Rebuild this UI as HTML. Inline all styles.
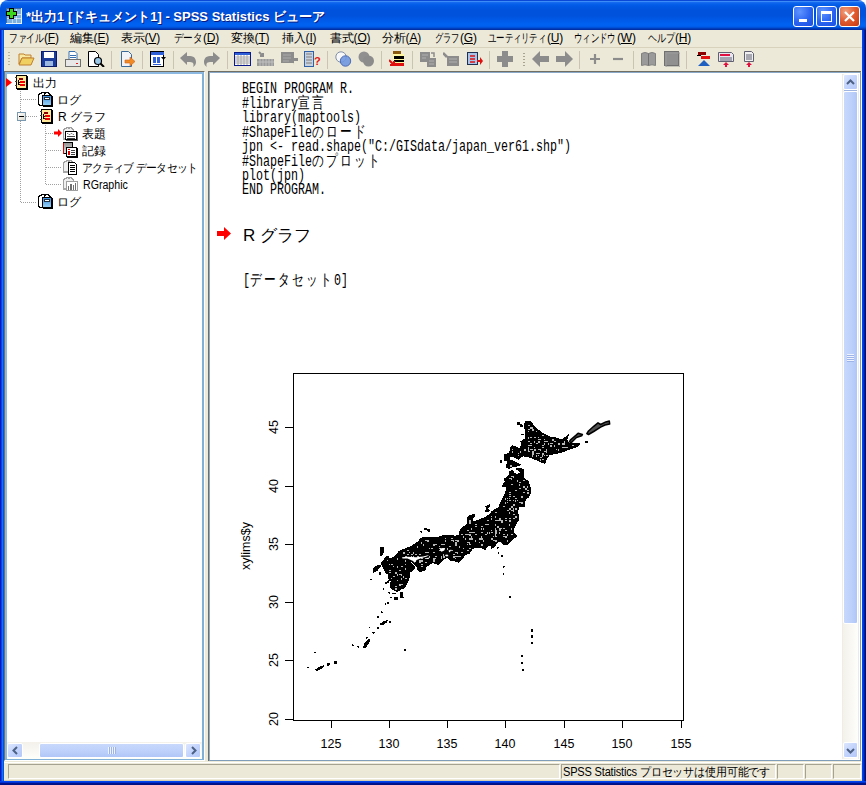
<!DOCTYPE html>
<html><head><meta charset="utf-8">
<style>
*{box-sizing:border-box}
html,body{margin:0;padding:0;width:866px;height:785px;overflow:hidden;background:#fff}
body{position:relative;font-family:"Liberation Sans",sans-serif;}
.a{position:absolute}
#title{left:0;top:0;width:866px;height:30px;border-radius:8px 8px 0 0;background:linear-gradient(#0a48d8 0px,#0a48d8 1px,#3c8cf8 1px,#3c8cf8 2px,#1a6cf0 2px,#0660ea 4px,#0058e4 6px,#0052dc 10px,#0052dc 16px,#005ceb 21px,#0062f2 25px,#005ae8 27px,#0046c8 28px,#0036b0 29px,#0028a0 30px)}
#frameL{left:0;top:30px;width:4px;height:755px;background:linear-gradient(90deg,#0014c8 0,#0014c8 1px,#0a44e0 1px,#0a44e0 2px,#1a6ef0 2px,#1a6ef0 3px,#0054e4 3px)}
#frameR{left:862px;top:30px;width:4px;height:755px;background:linear-gradient(90deg,#0044f0 0,#0044f0 1px,#0036d4 1px,#0036d4 2px,#001ea0 2px,#001ea0 3px,#001080 3px)}
#frameB{left:0;top:781px;width:866px;height:4px;background:linear-gradient(#0044f0 0,#0044f0 1px,#0030d0 1px,#0030d0 2px,#001490 2px,#001080 4px)}
#client{left:4px;top:30px;width:858px;height:751px;background:#ece9d8}
.ttl{left:26px;top:8px;color:#fff;font-weight:bold;font-size:13px;white-space:nowrap;text-shadow:1px 1px 0 #0a1a80}
.tb{top:6px;width:21px;height:21px;border:1px solid #fff;border-radius:3px;background:radial-gradient(circle at 30% 25%,#5f95ff,#2a63f0 55%,#1c4fe0)}
.tb.x{background:radial-gradient(circle at 30% 25%,#f0a080,#e05a30 50%,#c83810)}
.m{position:absolute;top:30px;font-size:12px;color:#000;white-space:nowrap;letter-spacing:-0.2px}
.k{display:inline-block;white-space:nowrap}.k span{display:inline-block;transform-origin:0 0}
.sep{position:absolute;top:51px;width:1px;height:18px;background:#c9c5b2}
.pane{background:#fff}
.code{position:absolute;left:242px;font-family:"Liberation Mono",monospace;font-size:16px;letter-spacing:0;white-space:pre;color:#000;line-height:14px;transform:scaleX(0.72917);transform-origin:0 0}
.code b{font-weight:normal;letter-spacing:3.2px;font-family:"Liberation Sans",sans-serif;font-size:16px}
.tree{position:absolute;font-size:12px;color:#000;white-space:nowrap}
.dh{position:absolute;height:1px;background-image:linear-gradient(90deg,#a0a0a0 50%,transparent 50%);background-size:2px 1px}
.dv{position:absolute;width:1px;background-image:linear-gradient(#a0a0a0 50%,transparent 50%);background-size:1px 2px}
.tick{position:absolute;font-size:12.5px;color:#000;white-space:nowrap;line-height:12px}
.sb-btn{position:absolute;width:17px;height:17px;border:1px solid #fff;border-radius:2px;background:linear-gradient(135deg,#dce6fd,#c3d4fc 50%,#b4c8f8)}
.thumb{position:absolute;border:1px solid #fff;border-radius:2px}
.stp{position:absolute;top:764px;height:15px;border-top:1px solid #a5a291;border-left:1px solid #a5a291;border-bottom:1px solid #fff;border-right:1px solid #fff}
</style></head><body>
<div class="a" id="title"></div>
<div class="a" id="frameL"></div>
<div class="a" id="frameR"></div>
<div class="a" id="frameB"></div>
<div class="a" id="client"></div>
<!-- title icon -->
<svg class="a" style="left:6px;top:8px" width="16" height="16" viewBox="0 0 16 16">
<rect x="0" y="0" width="16" height="16" fill="#e8f0f8"/><rect x="0" y="0" width="15" height="15" fill="#3a6aa8"/><rect x="1" y="1" width="14" height="14" fill="#7cb0e0"/>
<rect x="1" y="6" width="14" height="1" fill="#fff" opacity=".6"/><rect x="1" y="10" width="14" height="1" fill="#fff" opacity=".6"/>
<rect x="6" y="1" width="1" height="14" fill="#fff" opacity=".5"/><rect x="10" y="1" width="1" height="14" fill="#fff" opacity=".5"/>
<path d="M3 0h5v3h3v5h-3v3h-5v-3h-3v-5h3z" fill="#000"/><path d="M4 1h3v3h3v3h-3v3h-3v-3h-3v-3h3z" fill="#3cd61c"/>
</svg>
<div class="a ttl">*出力1 [ドキュメント1] - SPSS Statistics ビューア</div>
<div class="a tb" style="left:793px"><div class="a" style="left:5px;top:12px;width:8px;height:3px;background:#fff"></div></div>
<div class="a tb" style="left:816px"><div class="a" style="left:4px;top:4px;width:11px;height:11px;border:1px solid #fff;border-top-width:3px"></div></div>
<div class="a tb x" style="left:839px"><svg class="a" style="left:3px;top:3px" width="13" height="13" viewBox="0 0 13 13"><path d="M2 2L11 11M11 2L2 11" stroke="#fff" stroke-width="2.2"/></svg></div>
<!-- menu -->
<div class="a" style="left:4px;top:47px;width:858px;height:1px;background:#d8d2bd"></div>

<div class="m" style="left:9px"><span class="k" style="width:35px"><span style="transform:scaleX(0.73)">ファイル</span></span>(<u>F</u>)</div>
<div class="m" style="left:70px">編集(<u>E</u>)</div>
<div class="m" style="left:121px">表示(<u>V</u>)</div>
<div class="m" style="left:174px"><span class="k" style="width:29px"><span style="transform:scaleX(0.8)">データ</span></span>(<u>D</u>)</div>
<div class="m" style="left:231px">変換(<u>T</u>)</div>
<div class="m" style="left:282px">挿入(<u>I</u>)</div>
<div class="m" style="left:330px">書式(<u>O</u>)</div>
<div class="m" style="left:382px">分析(<u>A</u>)</div>
<div class="m" style="left:435px"><span class="k" style="width:25px"><span style="transform:scaleX(0.69)">グラフ</span></span>(<u>G</u>)</div>
<div class="m" style="left:488px"><span class="k" style="width:59px"><span style="transform:scaleX(0.7)">ユーティリティ</span></span>(<u>U</u>)</div>
<div class="m" style="left:574px"><span class="k" style="width:43px"><span style="transform:scaleX(0.7)">ウィンドウ</span></span>(<u>W</u>)</div>
<div class="m" style="left:648px"><span class="k" style="width:27px"><span style="transform:scaleX(0.75)">ヘルプ</span></span>(<u>H</u>)</div>

<div class="a" style="left:8px;top:52px;width:2px;height:14px;background-image:linear-gradient(#b8b4a0 50%,transparent 50%);background-size:2px 3px"></div>
<svg class="a" style="left:18px;top:51px" width="17" height="16" viewBox="0 0 17 16"><path d="M1 3h5l1 1h6v3H4L1 13z" fill="#f8e8a0" stroke="#c08030"/><path d="M1 14L4 7h12l-3 7z" fill="#f0d060" stroke="#c08030"/></svg>
<svg class="a" style="left:41px;top:51px" width="16" height="16" viewBox="0 0 16 16"><rect x="0.5" y="0.5" width="15" height="15" fill="#1c3c9c" stroke="#0c1c6c"/><rect x="3" y="1" width="10" height="6" fill="#fff"/><rect x="4" y="10" width="8" height="5" fill="#9cb8e0"/></svg>
<svg class="a" style="left:65px;top:51px" width="16" height="16" viewBox="0 0 16 16"><path d="M4 0.5h6l2 2v6H4z" fill="#fff" stroke="#3870b0"/><rect x="5" y="4" width="6" height="1" fill="#3870b0"/><rect x="5" y="6" width="6" height="1" fill="#3870b0"/><rect x="0.5" y="8.5" width="15" height="7" fill="#e8e8e8" stroke="#707070"/><rect x="11" y="12" width="2" height="1" fill="#e02020"/></svg>
<svg class="a" style="left:88px;top:51px" width="17" height="16" viewBox="0 0 17 16"><path d="M0.5 0.5h7l3 3v12h-10z" fill="#fff" stroke="#000"/><circle cx="10" cy="10" r="3.5" fill="#9cc8e8" stroke="#000" stroke-width="1.2"/><path d="M12.5 12.5l3.5 3.5" stroke="#000" stroke-width="2"/></svg>
<div class="sep" style="left:111px"></div>
<svg class="a" style="left:121px;top:51px" width="16" height="16" viewBox="0 0 16 16"><path d="M0.5 0.5h7l3 3v12h-10z" fill="#f0f4f8" stroke="#3a6a9a"/><path d="M4 9h5v-3l5 4.5-5 4.5v-3H4z" fill="#f08a24" stroke="#d06010" stroke-width=".6"/></svg>
<div class="sep" style="left:142px"></div>
<svg class="a" style="left:150px;top:51px" width="16" height="16" viewBox="0 0 16 16"><rect x="0.5" y="0.5" width="13" height="15" fill="#fff" stroke="#000"/><rect x="1" y="1" width="13" height="3" fill="#3060d8"/><rect x="3" y="6" width="3" height="6" fill="#3060d8"/><rect x="7" y="6" width="3" height="6" fill="#3060d8"/><rect x="3" y="13" width="8" height="1" fill="#3060d8"/><path d="M11 6h5l-2.5 3z" fill="#000"/></svg>
<div class="sep" style="left:173px"></div>
<svg class="a" style="left:180px;top:51px" width="17" height="16" viewBox="0 0 17 16"><path d="M0 7L7 1v4h3c5 0 6 4 6 6s-1 4-3 5c1-2 1-5-3-5H7v3z" fill="#8c8c8c"/></svg>
<svg class="a" style="left:203px;top:51px" width="17" height="16" viewBox="0 0 17 16"><path d="M17 7L10 1v4H7C2 5 1 9 1 11s1 4 3 5c-1-2-1-5 3-5h3v3z" fill="#8c8c8c"/></svg>
<div class="sep" style="left:227px"></div>
<svg class="a" style="left:234px;top:51px" width="17" height="16" viewBox="0 0 17 16"><rect x="0.5" y="1.5" width="16" height="13" fill="#fff" stroke="#0a1a8a"/><rect x="1" y="2" width="15" height="2" fill="#3060d8"/><path d="M1 6h15M1 8h15M1 10h15M1 12h15M4 4v10M7 4v10M10 4v10M13 4v10" stroke="#a8a8a8" stroke-width="1"/></svg>
<svg class="a" style="left:257px;top:51px" width="17" height="16" viewBox="0 0 17 16"><path d="M2 1l4 4M6 2v3h-3" stroke="#8c8c8c" stroke-width="2" fill="none"/><rect x="0" y="8" width="17" height="7" fill="#9a9a9a"/><path d="M0 11h17M3 8v7M6 8v7M9 8v7M12 8v7M15 8v7" stroke="#c0c0c0"/></svg>
<svg class="a" style="left:281px;top:51px" width="17" height="16" viewBox="0 0 17 16"><rect x="0" y="1" width="13" height="11" fill="#8c8c8c"/><path d="M13 7h4v3h-4l-1 4z" fill="#8c8c8c"/><path d="M2 4h8M2 7h8M2 10h6" stroke="#aaa"/></svg>
<svg class="a" style="left:304px;top:51px" width="17" height="16" viewBox="0 0 17 16"><rect x="0.5" y="0.5" width="9" height="15" fill="#c8d0dc" stroke="#3060a8"/><path d="M2 3h6M2 6h6M2 9h6M2 12h6" stroke="#808080"/><text x="10" y="14" font-size="11" font-weight="bold" fill="#e01818" font-family="Liberation Sans">?</text></svg>
<div class="sep" style="left:327px"></div>
<svg class="a" style="left:335px;top:51px" width="17" height="16" viewBox="0 0 17 16"><circle cx="6" cy="6" r="5.2" fill="#f8f8f8" stroke="#8090a8"/><circle cx="10.5" cy="10" r="5.2" fill="#7098e0" stroke="#4060b0" opacity=".9"/></svg>
<svg class="a" style="left:358px;top:51px" width="17" height="16" viewBox="0 0 17 16"><circle cx="6" cy="6" r="5.5" fill="#909090"/><circle cx="10.5" cy="10" r="5.5" fill="#8c8c8c"/></svg>
<div class="sep" style="left:381px"></div>
<svg class="a" style="left:389px;top:51px" width="16" height="16" viewBox="0 0 16 16"><rect x="4" y="0" width="8" height="3" fill="#8a5a10"/><rect x="4" y="3" width="11" height="12" fill="#fff8a0"/><rect x="5" y="5" width="10" height="3" fill="#000"/><rect x="5" y="9" width="10" height="2" fill="#000"/><rect x="6" y="12" width="9" height="3" fill="#e01010"/><path d="M0 9l5 5M1 14h4v-4" stroke="#e01010" stroke-width="2" fill="none"/></svg>
<div class="sep" style="left:412px"></div>
<svg class="a" style="left:420px;top:51px" width="16" height="16" viewBox="0 0 16 16"><rect x="0" y="1" width="10" height="10" fill="#8c8c8c"/><rect x="7" y="7" width="9" height="9" fill="#8c8c8c"/><path d="M11 2h3v4" stroke="#8c8c8c" stroke-width="1.5" fill="none"/><path d="M2 4h6M2 7h4M9 10h5M9 13h5" stroke="#b0b0b0"/></svg>
<svg class="a" style="left:443px;top:51px" width="16" height="16" viewBox="0 0 16 16"><path d="M0 2l4 4" stroke="#8c8c8c" stroke-width="2.5"/><rect x="4" y="5" width="12" height="10" fill="#8c8c8c"/><path d="M6 8h8M6 11h8" stroke="#b0b0b0"/></svg>
<svg class="a" style="left:466px;top:51px" width="17" height="16" viewBox="0 0 17 16"><rect x="1.5" y="1.5" width="10" height="12" fill="#a8c4e8" stroke="#203050"/><path d="M4 5h5M4 8h5M4 11h5" stroke="#e01010" stroke-width="1.5"/><path d="M11 9h3v-3l3 4-3 4v-3h-3z" fill="#e01010"/></svg>
<div class="sep" style="left:489px"></div>
<svg class="a" style="left:497px;top:51px" width="16" height="16" viewBox="0 0 16 16"><path d="M5 0h6v5h5v6h-5v5H5v-5H0V5h5z" fill="#8c8c8c"/></svg>
<div class="a" style="left:523px;top:53px;width:2px;height:13px;background-image:linear-gradient(#a8a490 50%,transparent 50%);background-size:2px 3px"></div>
<svg class="a" style="left:532px;top:51px" width="17" height="16" viewBox="0 0 17 16"><path d="M0 8l8-8v5h9v6H8v5z" fill="#8c8c8c"/></svg>
<svg class="a" style="left:556px;top:51px" width="17" height="16" viewBox="0 0 17 16"><path d="M17 8l-8-8v5H0v6h9v5z" fill="#8c8c8c"/></svg>
<div class="sep" style="left:579px"></div>
<svg class="a" style="left:590px;top:54px" width="10" height="10" viewBox="0 0 10 10"><path d="M0 5h10M5 0v10" stroke="#8c8c8c" stroke-width="2.2"/></svg>
<svg class="a" style="left:613px;top:54px" width="10" height="10" viewBox="0 0 10 10"><path d="M0 5h10" stroke="#8c8c8c" stroke-width="2.2"/></svg>
<div class="sep" style="left:633px"></div>
<svg class="a" style="left:641px;top:51px" width="16" height="16" viewBox="0 0 16 16"><path d="M0.5 2.5q3.5-2 7 0q3.5-2 7 0v12q-3.5-1.5-7 0q-3.5-1.5-7 0z" fill="#9a9a9a" stroke="#808080"/><path d="M7.5 2.5v12" stroke="#707070"/></svg>
<svg class="a" style="left:664px;top:51px" width="16" height="16" viewBox="0 0 16 16"><rect x="0.5" y="0.5" width="14" height="14" fill="#909090" stroke="#707070"/><rect x="2" y="2" width="14" height="14" fill="none" stroke="#9c9c9c"/></svg>
<div class="sep" style="left:686px"></div>
<svg class="a" style="left:697px;top:51px" width="14" height="16" viewBox="0 0 14 16"><rect x="1" y="1" width="8" height="3" fill="#8c0000"/><rect x="0" y="4" width="4" height="1" fill="#000"/><rect x="4" y="5" width="9" height="3" fill="#e01010"/><path d="M7 9l6 6H1z" fill="#2060c0"/></svg>
<svg class="a" style="left:718px;top:51px" width="16" height="16" viewBox="0 0 16 16"><path d="M0.5 1.5h13l2 2v7h-15z" fill="#e8e8f0" stroke="#606070"/><rect x="2" y="3" width="10" height="2" fill="#e01040"/><path d="M2 7h12M2 9h12" stroke="#606070"/><path d="M8 11l3 3h-2v2h-2v-2h-2z" fill="#e01040"/></svg>
<svg class="a" style="left:744px;top:51px" width="10" height="16" viewBox="0 0 10 16"><path d="M0.5 0.5h7l2 2v8h-9z" fill="#f0f0f0" stroke="#606070"/><path d="M2 4h6M2 6h6M2 8h6" stroke="#606070"/><path d="M5 11l3 3h-2v2h-2v-2h-2z" fill="#e01040"/></svg>

<!-- panes -->
<div class="a" style="left:4px;top:71px;width:201px;height:690px;border-top:1px solid #716f64;border-left:1px solid #716f64;border-right:1px solid #fff;border-bottom:1px solid #fff"><div class="a pane" style="left:0;top:0;width:199px;height:688px;border:2px solid #7fb0d8;border-left-color:#8ab8e0;border-top-color:#8ab8e0"></div></div>
<div class="a" style="left:208px;top:71px;width:653px;height:690px;border-top:1px solid #716f64;border-left:1px solid #716f64;"><div class="a pane" style="left:0;top:0;width:652px;height:689px;border:1px solid #7f9db9;border-left-color:#8aa8c8;border-top-color:#8aa8c8"></div></div><div class="a" style="left:861px;top:71px;width:1px;height:690px;background:#fbfaf2"></div>

<svg class="a" style="left:6px;top:78px" width="6" height="9" viewBox="0 0 6 9"><path d="M0 0L6 4.5L0 9z" fill="#f00"/></svg>
<svg class="a" style="left:15px;top:75px" width="14" height="15" viewBox="0 0 14 15" shape-rendering="crispEdges"><rect x="1.5" y="0.5" width="10" height="13" fill="#ffe89a" stroke="#000"/><rect x="12" y="1" width="1" height="14" fill="#000"/><rect x="2" y="14" width="11" height="1" fill="#000"/><rect x="4" y="3" width="4" height="2" fill="#8a0000"/><rect x="3" y="5" width="1" height="5" fill="#000"/><rect x="3" y="7" width="2" height="1" fill="#000"/><rect x="3" y="9" width="2" height="1" fill="#000"/><rect x="5" y="6" width="5" height="2" fill="#f00000"/><rect x="5" y="9" width="5" height="2" fill="#f00000"/><rect x="0" y="2" width="2" height="1" fill="#404040"/><rect x="0" y="6" width="2" height="1" fill="#404040"/><rect x="0" y="10" width="2" height="1" fill="#404040"/></svg>
<div class="tree" style="left:33px;top:75px;font-size:12px">出力</div>
<div class="dv" style="left:20px;top:91px;height:111px"></div>
<div class="dh" style="left:21px;top:99px;height:1px;width:16px"></div>
<svg class="a" style="left:37px;top:91px" width="17" height="16" viewBox="0 0 17 16" shape-rendering="crispEdges"><defs><linearGradient id="bg3791" x1="0" y1="0" x2="0" y2="1"><stop offset="0" stop-color="#3a8ee0"/><stop offset="1" stop-color="#9cd4f8"/></linearGradient></defs><path d="M1 3h1v-1h2v-1h3v1h1v10h-1v2H2v-1H1z" fill="#fff" stroke="#000" stroke-width="1"/><path d="M7 2h1v-1h3v1h1v1h1v1H7z" fill="#fff" stroke="#000"/><rect x="5.5" y="4.5" width="9" height="10" fill="url(#bg3791)" stroke="#000"/><rect x="15" y="5" width="1" height="11" fill="#000"/><rect x="6" y="15" width="10" height="1" fill="#000"/><rect x="7.5" y="6.5" width="5" height="2" fill="#fff" stroke="#203040"/></svg>
<div class="tree" style="left:57px;top:92px;font-size:12px">ログ</div>
<div class="a" style="left:17px;top:112px;width:9px;height:9px;border:1px solid #7a98af;background:linear-gradient(135deg,#fff,#dcd8c8)"><div class="a" style="left:1px;top:3px;width:5px;height:1px;background:#000"></div></div>
<div class="dh" style="left:26px;top:116px;width:12px"></div>
<svg class="a" style="left:40px;top:109px" width="14" height="15" viewBox="0 0 14 15" shape-rendering="crispEdges"><rect x="1.5" y="0.5" width="10" height="13" fill="#ffe89a" stroke="#000"/><rect x="12" y="1" width="1" height="14" fill="#000"/><rect x="2" y="14" width="11" height="1" fill="#000"/><rect x="4" y="3" width="4" height="2" fill="#8a0000"/><rect x="3" y="5" width="1" height="5" fill="#000"/><rect x="3" y="7" width="2" height="1" fill="#000"/><rect x="3" y="9" width="2" height="1" fill="#000"/><rect x="5" y="6" width="5" height="2" fill="#f00000"/><rect x="5" y="9" width="5" height="2" fill="#f00000"/><rect x="0" y="2" width="2" height="1" fill="#404040"/><rect x="0" y="6" width="2" height="1" fill="#404040"/><rect x="0" y="10" width="2" height="1" fill="#404040"/></svg>
<div class="tree" style="left:58px;top:109px;font-size:12px">R グラフ</div>
<div class="dv" style="left:45px;top:125px;height:59px"></div>
<div class="dh" style="left:46px;top:133px;width:8px"></div>
<svg class="a" style="left:54px;top:129px" width="8" height="8" viewBox="0 0 8 8"><path d="M0 2.5h4V0l4 4-4 4V5.5H0z" fill="#f00"/></svg>
<svg class="a" style="left:62px;top:126px" width="17" height="16" viewBox="0 0 17 16" shape-rendering="crispEdges"><path d="M1 3h1v-1h2v-1h2v1h1v-1h2v1h1v1h1v10H2v-1H1z" fill="#f0f0f0" stroke="#a0a0a0"/><rect x="1" y="12" width="8" height="2" fill="#a8a8a8"/><rect x="3.5" y="5.5" width="11" height="8" fill="#fff" stroke="#000"/><rect x="15" y="6" width="1" height="8" fill="#606060"/><rect x="4" y="14" width="12" height="1" fill="#606060"/><path d="M5 7.5h1l1 1h1l1-1h1l1 1h1" stroke="#808080" fill="none" shape-rendering="auto"/><rect x="5" y="10" width="8" height="1" fill="#404040"/><rect x="5" y="12" width="8" height="1" fill="#404040"/></svg>
<div class="tree" style="left:82px;top:126px;font-size:12px">表題</div>
<div class="dh" style="left:46px;top:150px;width:16px"></div>
<svg class="a" style="left:62px;top:142px" width="17" height="16" viewBox="0 0 17 16" shape-rendering="crispEdges"><defs><linearGradient id="lg142" x1="0" y1="0" x2="0" y2="1"><stop offset="0" stop-color="#909090"/><stop offset="1" stop-color="#e8e8e8"/></linearGradient></defs><rect x="1.5" y="0.5" width="9" height="11" fill="url(#lg142)" stroke="#000"/><rect x="1" y="1" width="1" height="11" fill="#e00000"/><rect x="4.5" y="5.5" width="10" height="9" fill="#fff" stroke="#000"/><rect x="15" y="6" width="1" height="9" fill="#000"/><rect x="5" y="15" width="11" height="1" fill="#000"/><rect x="6" y="7" width="2" height="1" fill="#e00000"/><rect x="6" y="9" width="2" height="4" fill="#e00000"/><rect x="9" y="8" width="4" height="1" fill="#404040"/><rect x="9" y="10" width="4" height="1" fill="#404040"/><rect x="9" y="12" width="4" height="1" fill="#404040"/></svg>
<div class="tree" style="left:82px;top:143px;font-size:12px">記録</div>
<div class="dh" style="left:46px;top:167px;width:16px"></div>
<svg class="a" style="left:62px;top:159px" width="17" height="16" viewBox="0 0 17 16" shape-rendering="crispEdges"><path d="M1 3h1v-1h2v-1h2v1h1v-1h2v1h1v1h1v10H2v-1H1z" fill="#f0f0f0" stroke="#a0a0a0"/><rect x="1" y="12" width="8" height="2" fill="#a8a8a8"/><path d="M6.5 3.5h6l2 2v9.5h-8z" fill="#fff" stroke="#000"/><rect x="7" y="15" width="8" height="1" fill="#000"/><rect x="8" y="6" width="5" height="1" fill="#000"/><rect x="8" y="8" width="5" height="1" fill="#000"/><rect x="8" y="10" width="5" height="1" fill="#000"/><rect x="8" y="12" width="5" height="1" fill="#000"/></svg>
<div class="tree" style="left:82px;top:160px;font-size:12px;letter-spacing:-0.6px;transform:scaleX(0.9);transform-origin:0 0">アクティブ データセット</div>
<div class="dh" style="left:46px;top:184px;width:16px"></div>
<svg class="a" style="left:62px;top:176px" width="17" height="16" viewBox="0 0 17 16" shape-rendering="crispEdges"><path d="M1 3h1v-1h2v-1h2v1h1v-1h2v1h1v1h1v10H2v-1H1z" fill="#f0f0f0" stroke="#a0a0a0"/><rect x="1" y="12" width="8" height="2" fill="#a8a8a8"/><rect x="4.5" y="5.5" width="11" height="9" fill="#fff" stroke="#a0a0a0"/><rect x="6" y="10" width="1" height="4" fill="#707070"/><rect x="8" y="8" width="2" height="6" fill="#707070"/><rect x="11" y="9" width="1" height="5" fill="#707070"/><rect x="13" y="7" width="1" height="7" fill="#707070"/></svg>
<div class="tree" style="left:83px;top:178px;font-size:12px;transform:scaleX(0.885);transform-origin:0 0">RGraphic</div>
<div class="dh" style="left:21px;top:202px;width:16px"></div>
<svg class="a" style="left:37px;top:193px" width="17" height="16" viewBox="0 0 17 16" shape-rendering="crispEdges"><defs><linearGradient id="bg37193" x1="0" y1="0" x2="0" y2="1"><stop offset="0" stop-color="#3a8ee0"/><stop offset="1" stop-color="#9cd4f8"/></linearGradient></defs><path d="M1 3h1v-1h2v-1h3v1h1v10h-1v2H2v-1H1z" fill="#fff" stroke="#000" stroke-width="1"/><path d="M7 2h1v-1h3v1h1v1h1v1H7z" fill="#fff" stroke="#000"/><rect x="5.5" y="4.5" width="9" height="10" fill="url(#bg37193)" stroke="#000"/><rect x="15" y="5" width="1" height="11" fill="#000"/><rect x="6" y="15" width="10" height="1" fill="#000"/><rect x="7.5" y="6.5" width="5" height="2" fill="#fff" stroke="#203040"/></svg>
<div class="tree" style="left:57px;top:194px;font-size:12px">ログ</div>


<div class="code" style="top:82px">BEGIN PROGRAM R.
#library<b>宣言</b>
library(maptools)
#ShapeFile<b>のロード</b>
jpn &lt;- read.shape("C:/GISdata/japan_ver61.shp")
#ShapeFile<b>のプロット</b>
plot(jpn)
END PROGRAM.</div>
<svg class="a" style="left:217px;top:227px" width="14" height="13" viewBox="0 0 14 13"><path d="M0 4h7V0l7 6.5L7 13V9H0z" fill="#f00"/></svg>
<div class="a" style="left:243px;top:224px;font-size:17px;white-space:nowrap">R グラフ</div>
<div class="code" style="left:243px;top:273px">[<b>データセット</b>0]</div>
<div class="tick" style="left:319px;top:738px;width:24px;text-align:center">125</div><div class="tick" style="left:377px;top:738px;width:24px;text-align:center">130</div><div class="tick" style="left:435px;top:738px;width:24px;text-align:center">135</div><div class="tick" style="left:493px;top:738px;width:24px;text-align:center">140</div><div class="tick" style="left:552px;top:738px;width:24px;text-align:center">145</div><div class="tick" style="left:610px;top:738px;width:24px;text-align:center">150</div><div class="tick" style="left:669px;top:738px;width:24px;text-align:center">155</div><div class="tick" style="left:262px;top:421px;width:24px;text-align:center;transform:rotate(-90deg)">45</div><div class="tick" style="left:262px;top:480px;width:24px;text-align:center;transform:rotate(-90deg)">40</div><div class="tick" style="left:262px;top:538px;width:24px;text-align:center;transform:rotate(-90deg)">35</div><div class="tick" style="left:262px;top:596px;width:24px;text-align:center;transform:rotate(-90deg)">30</div><div class="tick" style="left:262px;top:654px;width:24px;text-align:center;transform:rotate(-90deg)">25</div><div class="tick" style="left:262px;top:713px;width:24px;text-align:center;transform:rotate(-90deg)">20</div><div class="tick" style="left:216px;top:540px;width:60px;text-align:center;transform:rotate(-90deg)">xylims$y</div>
<svg class="a" style="left:0;top:0" width="866" height="785" viewBox="0 0 866 785">
<rect x="293.5" y="373.5" width="390" height="347" fill="none" stroke="#000" stroke-width="1"/>
<path d="M285 427.5H293" stroke="#000"/>
<path d="M285 486.5H293" stroke="#000"/>
<path d="M285 544.5H293" stroke="#000"/>
<path d="M285 602.5H293" stroke="#000"/>
<path d="M285 660.5H293" stroke="#000"/>
<path d="M285 719.5H293" stroke="#000"/>
<path d="M331.5 721V728" stroke="#000"/>
<path d="M389.5 721V728" stroke="#000"/>
<path d="M447.5 721V728" stroke="#000"/>
<path d="M505.5 721V728" stroke="#000"/>
<path d="M564.5 721V728" stroke="#000"/>
<path d="M622.5 721V728" stroke="#000"/>
<path d="M681.5 721V728" stroke="#000"/>
<g fill="#000" stroke="#000" stroke-width="1" stroke-linejoin="round" shape-rendering="crispEdges">
<polygon points="509.6,471.5 512.5,470.5 514.1,473.1 516.0,474.4 519.8,473.8 520.5,471.8 516.5,469.0 520.5,468.7 523.7,469.3 523.0,477.6 528.1,481.4 530.0,486.5 530.4,489.6 530.4,493.4 528.2,497.2 525.1,499.5 524.7,506.4 522.0,506.4 518.2,507.2 517.8,512.5 519.0,518.6 517.5,522.5 514.4,526.3 513.9,528.1 513.9,532.7 516.7,536.4 512.1,539.2 510.2,542.0 506.5,544.7 503.7,544.7 502.8,543.8 501.0,541.5 499.1,541.5 496.4,542.9 494.5,546.6 491.7,548.4 490.8,544.7 488.0,545.6 485.3,549.3 480.6,547.5 477.0,547.5 472.3,548.4 469.6,553.0 464.9,554.9 462.2,558.6 458.5,562.3 452.9,560.4 451.8,561.0 447.0,556.9 442.1,560.3 438.0,564.5 432.4,562.4 426.2,566.6 424.8,570.7 419.2,571.4 417.9,569.3 416.5,566.0 414.4,563.8 410.9,560.5 405.0,558.5 401.0,557.5 397.5,556.5 395.5,556.0 399.2,551.3 406.1,548.6 412.3,545.8 418.6,541.6 420.6,538.2 427.6,537.5 438.0,537.8 440.7,536.1 450.4,535.4 455.0,536.1 458.9,535.5 460.3,529.9 467.7,523.5 467.3,518.9 468.6,516.1 474.2,514.2 475.1,516.1 472.3,517.9 472.3,520.7 475.1,521.6 479.7,519.8 486.2,517.0 491.7,513.3 491.5,511.8 499.1,507.2 500.6,502.6 503.7,497.2 506.0,491.1 506.0,486.5 502.2,486.5 505.2,481.4 504.6,478.9 509.6,475.0"/>
<polygon points="385.3,557.2 387.9,556.3 389.4,559.4 394.0,557.2 398.6,554.2 400.5,555.8 402.4,557.4 409.3,558.9 410.8,562.7 413.8,565.8 414.8,568.3 411.8,570.8 409.0,572.8 409.0,578.2 406.6,584.5 404.2,587.8 400.4,589.3 397.2,591.8 394.4,590.2 390.5,587.8 390.5,584.3 391.3,581.3 389.0,578.6 388.0,573.8 385.8,572.8 384.6,569.5 382.4,566.3 381.5,563.0 383.2,561.2 384.5,560.0"/>
<polygon points="528.0,421.0 530.8,422.0 532.9,424.8 536.4,428.3 540.7,432.2 545.6,435.0 550.5,437.1 556.1,438.1 561.7,440.1 568.6,434.9 566.8,439.2 568.6,443.6 579.8,443.1 578.1,446.2 572.9,447.9 567.7,449.6 561.7,452.2 553.0,454.0 549.1,455.0 546.1,459.2 544.9,463.4 540.7,462.0 535.0,459.2 529.4,457.1 523.1,455.7 518.2,459.2 514.0,457.1 510.5,456.4 508.4,459.2 513.3,461.3 520.3,464.8 516.8,466.2 512.0,467.0 509.1,468.3 506.3,466.9 507.7,461.3 504.2,459.9 504.2,455.0 509.8,452.8 510.5,447.2 512.6,445.8 519.6,448.6 521.7,445.1 521.0,441.6 525.2,438.8 525.9,433.2 524.5,426.2 525.2,422.0"/>
<polygon points="486.0,506.5 489.5,505.0 490.0,506.2 487.5,508.3 489.8,510.8 486.0,512.0 485.2,511.0 486.8,509.3"/>
<polygon points="380.2,547.6 384.0,547.0 383.8,552.0 381.0,556.0 380.0,554.0"/>
<polygon points="373.3,569.0 378.0,565.0 381.0,565.5 377.0,570.5 373.5,572.4"/>
<polygon points="363.5,647.5 365.0,643.0 368.0,640.0 370.0,639.8 368.5,643.0 365.5,647.5"/>
<polygon points="380.0,624.5 383.0,622.0 387.6,620.3 386.0,622.5 382.0,625.0"/>
<polygon points="315.5,669.8 319.0,667.5 323.5,666.0 321.0,668.5 317.0,670.5"/>
<polygon points="385.6,582.8 389.4,580.5 388.0,582.5 386.0,583.5"/>
<polygon points="400.8,592.7 402.5,592.5 403.1,597.3 401.0,598.0"/>
<polygon points="394.0,597.0 397.8,597.5 397.0,599.5 394.5,599.5"/>
<rect x="517.5" y="422.5" width="2" height="2"/>
<rect x="520.0" y="424.5" width="2" height="2"/>
<rect x="521.0" y="434.0" width="2.5" height="0.6"/>
<rect x="500.0" y="460.0" width="1.5" height="2.5"/>
<rect x="480.0" y="528.0" width="1.5" height="0.8"/>
<rect x="477.5" y="522.0" width="0.8" height="0.8"/>
<rect x="585.5" y="441.4" width="2" height="1.5"/>
<rect x="424.4" y="528.3" width="2.5" height="1.5"/>
<rect x="427.5" y="529.0" width="2" height="2"/>
<rect x="420.5" y="531.0" width="1" height="1"/>
<rect x="388.9" y="592.5" width="1" height="0.6"/>
<rect x="392.4" y="593.2" width="3" height="0.6"/>
<rect x="390.9" y="597.3" width="1" height="0.6"/>
<rect x="383.3" y="588.5" width="0.6" height="1.2"/>
<rect x="370.7" y="579.0" width="1" height="0.8"/>
<rect x="385.1" y="603.5" width="0.8" height="1.2"/>
<rect x="387.6" y="602.2" width="1" height="1"/>
<rect x="381.0" y="611.8" width="1" height="0.8"/>
<rect x="377.5" y="616.4" width="0.8" height="0.8"/>
<rect x="369.2" y="627.3" width="0.6" height="0.6"/>
<rect x="377.0" y="627.2" width="1.5" height="1.5"/>
<rect x="372.6" y="632.0" width="1.5" height="1"/>
<rect x="366.0" y="637.0" width="1" height="1"/>
<rect x="352.0" y="644.5" width="1" height="1"/>
<rect x="404.5" y="649.8" width="1" height="1"/>
<rect x="314.0" y="652.0" width="1" height="0.6"/>
<rect x="307.6" y="667.3" width="1" height="0.6"/>
<rect x="327.6" y="663.6" width="1.5" height="1.5"/>
<rect x="334.5" y="661.8" width="2" height="1.5"/>
<rect x="497.1" y="547.0" width="1" height="1"/>
<rect x="498.0" y="552.2" width="0.8" height="0.8"/>
<rect x="501.4" y="555.6" width="0.8" height="0.8"/>
<rect x="503.0" y="566.4" width="1" height="1"/>
<rect x="503.2" y="573.6" width="0.6" height="0.6"/>
<rect x="509.3" y="596.8" width="1" height="0.6"/>
<rect x="531.8" y="629.8" width="0.8" height="1.4"/>
<rect x="531.8" y="635.8" width="0.8" height="1.4"/>
<rect x="531.8" y="642.0" width="0.8" height="1.4"/>
<rect x="521.6" y="655.6" width="0.5" height="0.8"/>
<rect x="521.8" y="662.8" width="0.8" height="0.5"/>
<rect x="522.8" y="669.5" width="0.5" height="0.8"/>
<rect x="668.9" y="668.9" width="0.2" height="0.2"/>
<rect x="357.8" y="646.0" width="1" height="1"/>
<rect x="389.5" y="621.5" width="1" height="1"/>
<rect x="379.5" y="572.7" width="1" height="1.5"/>
</g>
<g fill="#505050" stroke="#000" stroke-width="1.5" stroke-linejoin="round">
<polygon points="569.4,441.8 570.3,440.1 576.4,434.9 578.1,433.2 582.4,434.5 581.6,435.8 576.4,437.5 571.2,442.7"/>
<polygon points="586.8,433.6 588.5,431.0 593.7,426.3 598.0,422.8 600.6,424.5 605.8,421.9 609.3,421.1 609.7,424.1 605.0,425.0 600.6,427.1 593.7,431.5 588.5,434.5"/>
</g>
<g fill="#b8b8b8" shape-rendering="crispEdges">
<rect x="511" y="476" width="2" height="1"/>
<rect x="513" y="476" width="1" height="2"/>
<rect x="509" y="478" width="2" height="1"/>
<rect x="511" y="478" width="1" height="2"/>
<rect x="517" y="480" width="1" height="2"/>
<rect x="523" y="480" width="2" height="1"/>
<rect x="519" y="482" width="2" height="1"/>
<rect x="511" y="484" width="2" height="1"/>
<rect x="519" y="484" width="1" height="2"/>
<rect x="523" y="486" width="2" height="2"/>
<rect x="527" y="486" width="1" height="2"/>
<rect x="519" y="488" width="2" height="1"/>
<rect x="525" y="488" width="2" height="2"/>
<rect x="515" y="490" width="2" height="1"/>
<rect x="527" y="490" width="2" height="1"/>
<rect x="509" y="492" width="2" height="1"/>
<rect x="523" y="492" width="2" height="1"/>
<rect x="527" y="492" width="2" height="2"/>
<rect x="509" y="494" width="2" height="1"/>
<rect x="509" y="496" width="2" height="1"/>
<rect x="513" y="496" width="2" height="1"/>
<rect x="521" y="496" width="2" height="2"/>
<rect x="505" y="498" width="1" height="2"/>
<rect x="507" y="498" width="1" height="1"/>
<rect x="509" y="498" width="1" height="1"/>
<rect x="515" y="498" width="2" height="1"/>
<rect x="507" y="500" width="1" height="1"/>
<rect x="509" y="500" width="2" height="1"/>
<rect x="513" y="500" width="1" height="1"/>
<rect x="515" y="500" width="1" height="2"/>
<rect x="517" y="500" width="1" height="1"/>
<rect x="505" y="502" width="1" height="2"/>
<rect x="507" y="502" width="1" height="1"/>
<rect x="519" y="502" width="2" height="1"/>
<rect x="521" y="502" width="2" height="2"/>
<rect x="513" y="504" width="2" height="2"/>
<rect x="503" y="506" width="2" height="1"/>
<rect x="511" y="506" width="2" height="2"/>
<rect x="509" y="508" width="2" height="2"/>
<rect x="513" y="508" width="1" height="2"/>
<rect x="515" y="508" width="2" height="2"/>
<rect x="507" y="510" width="2" height="1"/>
<rect x="511" y="510" width="2" height="1"/>
<rect x="513" y="510" width="1" height="2"/>
<rect x="495" y="512" width="2" height="1"/>
<rect x="509" y="512" width="1" height="2"/>
<rect x="513" y="514" width="2" height="1"/>
<rect x="491" y="516" width="1" height="1"/>
<rect x="495" y="516" width="1" height="2"/>
<rect x="515" y="516" width="2" height="2"/>
<rect x="491" y="518" width="1" height="2"/>
<rect x="499" y="518" width="2" height="2"/>
<rect x="505" y="518" width="2" height="1"/>
<rect x="509" y="518" width="2" height="1"/>
<rect x="513" y="518" width="2" height="1"/>
<rect x="469" y="520" width="2" height="2"/>
<rect x="487" y="520" width="2" height="1"/>
<rect x="495" y="520" width="2" height="1"/>
<rect x="497" y="520" width="2" height="1"/>
<rect x="499" y="520" width="2" height="1"/>
<rect x="501" y="520" width="2" height="2"/>
<rect x="505" y="520" width="2" height="1"/>
<rect x="509" y="520" width="2" height="2"/>
<rect x="469" y="522" width="2" height="2"/>
<rect x="501" y="522" width="2" height="1"/>
<rect x="475" y="524" width="2" height="1"/>
<rect x="485" y="524" width="2" height="1"/>
<rect x="487" y="524" width="2" height="1"/>
<rect x="495" y="524" width="1" height="2"/>
<rect x="509" y="524" width="1" height="2"/>
<rect x="475" y="526" width="2" height="1"/>
<rect x="481" y="526" width="2" height="1"/>
<rect x="497" y="526" width="2" height="2"/>
<rect x="471" y="528" width="1" height="2"/>
<rect x="481" y="528" width="1" height="2"/>
<rect x="483" y="528" width="1" height="2"/>
<rect x="495" y="528" width="1" height="2"/>
<rect x="499" y="528" width="2" height="2"/>
<rect x="501" y="528" width="1" height="1"/>
<rect x="503" y="528" width="2" height="1"/>
<rect x="511" y="528" width="1" height="2"/>
<rect x="467" y="530" width="2" height="1"/>
<rect x="491" y="530" width="1" height="1"/>
<rect x="495" y="530" width="2" height="2"/>
<rect x="499" y="530" width="2" height="1"/>
<rect x="505" y="530" width="2" height="1"/>
<rect x="469" y="532" width="2" height="1"/>
<rect x="471" y="532" width="2" height="1"/>
<rect x="473" y="532" width="2" height="1"/>
<rect x="481" y="532" width="2" height="1"/>
<rect x="487" y="532" width="1" height="2"/>
<rect x="489" y="532" width="1" height="2"/>
<rect x="491" y="532" width="2" height="1"/>
<rect x="495" y="532" width="2" height="2"/>
<rect x="499" y="532" width="1" height="2"/>
<rect x="461" y="534" width="2" height="1"/>
<rect x="465" y="534" width="2" height="1"/>
<rect x="467" y="534" width="2" height="1"/>
<rect x="469" y="534" width="2" height="2"/>
<rect x="475" y="534" width="2" height="1"/>
<rect x="485" y="534" width="2" height="1"/>
<rect x="495" y="534" width="1" height="2"/>
<rect x="503" y="534" width="2" height="1"/>
<rect x="507" y="534" width="1" height="2"/>
<rect x="511" y="534" width="2" height="1"/>
<rect x="463" y="536" width="1" height="2"/>
<rect x="471" y="536" width="1" height="2"/>
<rect x="481" y="536" width="1" height="2"/>
<rect x="493" y="536" width="1" height="1"/>
<rect x="495" y="536" width="2" height="1"/>
<rect x="503" y="536" width="2" height="1"/>
<rect x="505" y="536" width="2" height="2"/>
<rect x="445" y="538" width="1" height="1"/>
<rect x="451" y="538" width="2" height="1"/>
<rect x="465" y="538" width="1" height="2"/>
<rect x="469" y="538" width="2" height="2"/>
<rect x="471" y="538" width="2" height="2"/>
<rect x="479" y="538" width="2" height="2"/>
<rect x="481" y="538" width="2" height="2"/>
<rect x="491" y="538" width="2" height="2"/>
<rect x="425" y="540" width="2" height="1"/>
<rect x="427" y="540" width="2" height="2"/>
<rect x="445" y="540" width="1" height="2"/>
<rect x="451" y="540" width="2" height="1"/>
<rect x="453" y="540" width="1" height="2"/>
<rect x="455" y="540" width="2" height="1"/>
<rect x="457" y="540" width="2" height="2"/>
<rect x="475" y="540" width="1" height="2"/>
<rect x="483" y="540" width="1" height="2"/>
<rect x="493" y="540" width="2" height="1"/>
<rect x="495" y="540" width="2" height="2"/>
<rect x="507" y="540" width="1" height="2"/>
<rect x="421" y="542" width="1" height="2"/>
<rect x="455" y="542" width="2" height="2"/>
<rect x="467" y="542" width="2" height="1"/>
<rect x="469" y="542" width="1" height="2"/>
<rect x="479" y="542" width="1" height="1"/>
<rect x="423" y="544" width="1" height="2"/>
<rect x="433" y="544" width="2" height="2"/>
<rect x="435" y="544" width="2" height="1"/>
<rect x="441" y="544" width="2" height="1"/>
<rect x="443" y="544" width="2" height="1"/>
<rect x="455" y="544" width="2" height="2"/>
<rect x="467" y="544" width="1" height="1"/>
<rect x="469" y="544" width="2" height="1"/>
<rect x="481" y="544" width="2" height="2"/>
<rect x="417" y="546" width="1" height="2"/>
<rect x="439" y="546" width="1" height="1"/>
<rect x="449" y="546" width="2" height="1"/>
<rect x="459" y="546" width="1" height="2"/>
<rect x="429" y="548" width="1" height="1"/>
<rect x="431" y="548" width="2" height="1"/>
<rect x="439" y="548" width="2" height="1"/>
<rect x="443" y="548" width="2" height="1"/>
<rect x="447" y="548" width="1" height="2"/>
<rect x="463" y="548" width="1" height="1"/>
<rect x="469" y="548" width="2" height="1"/>
<rect x="407" y="550" width="2" height="1"/>
<rect x="439" y="550" width="2" height="1"/>
<rect x="451" y="550" width="2" height="1"/>
<rect x="467" y="550" width="2" height="1"/>
<rect x="403" y="552" width="2" height="2"/>
<rect x="409" y="552" width="1" height="1"/>
<rect x="413" y="552" width="1" height="2"/>
<rect x="425" y="552" width="2" height="1"/>
<rect x="427" y="552" width="2" height="1"/>
<rect x="433" y="552" width="2" height="1"/>
<rect x="455" y="552" width="2" height="1"/>
<rect x="457" y="552" width="1" height="2"/>
<rect x="461" y="552" width="2" height="1"/>
<rect x="407" y="554" width="2" height="1"/>
<rect x="411" y="554" width="2" height="1"/>
<rect x="415" y="554" width="2" height="1"/>
<rect x="419" y="554" width="2" height="1"/>
<rect x="443" y="554" width="1" height="2"/>
<rect x="453" y="554" width="2" height="1"/>
<rect x="405" y="556" width="2" height="2"/>
<rect x="411" y="556" width="1" height="2"/>
<rect x="413" y="556" width="1" height="2"/>
<rect x="417" y="556" width="2" height="1"/>
<rect x="429" y="556" width="1" height="2"/>
<rect x="435" y="556" width="2" height="1"/>
<rect x="441" y="556" width="1" height="2"/>
<rect x="443" y="556" width="2" height="2"/>
<rect x="453" y="556" width="2" height="2"/>
<rect x="455" y="556" width="2" height="1"/>
<rect x="457" y="556" width="2" height="1"/>
<rect x="459" y="556" width="2" height="1"/>
<rect x="417" y="558" width="1" height="1"/>
<rect x="421" y="558" width="2" height="1"/>
<rect x="425" y="558" width="2" height="1"/>
<rect x="427" y="558" width="2" height="1"/>
<rect x="433" y="558" width="2" height="2"/>
<rect x="435" y="558" width="1" height="1"/>
<rect x="441" y="558" width="1" height="1"/>
<rect x="455" y="558" width="1" height="1"/>
<rect x="415" y="560" width="1" height="2"/>
<rect x="419" y="560" width="2" height="2"/>
<rect x="421" y="560" width="2" height="2"/>
<rect x="433" y="560" width="2" height="2"/>
<rect x="419" y="562" width="2" height="1"/>
<rect x="425" y="562" width="2" height="1"/>
<rect x="421" y="564" width="2" height="1"/>
<rect x="421" y="566" width="2" height="1"/>
<rect x="397" y="558" width="1" height="2"/>
<rect x="387" y="560" width="1" height="1"/>
<rect x="405" y="560" width="1" height="2"/>
<rect x="389" y="564" width="1" height="1"/>
<rect x="391" y="564" width="2" height="1"/>
<rect x="405" y="564" width="1" height="1"/>
<rect x="393" y="566" width="1" height="1"/>
<rect x="397" y="566" width="1" height="2"/>
<rect x="401" y="566" width="2" height="1"/>
<rect x="405" y="568" width="1" height="2"/>
<rect x="389" y="570" width="2" height="1"/>
<rect x="399" y="570" width="2" height="1"/>
<rect x="389" y="572" width="2" height="1"/>
<rect x="395" y="572" width="2" height="2"/>
<rect x="397" y="574" width="1" height="2"/>
<rect x="399" y="574" width="2" height="1"/>
<rect x="401" y="574" width="1" height="2"/>
<rect x="393" y="576" width="2" height="1"/>
<rect x="403" y="576" width="1" height="2"/>
<rect x="391" y="578" width="1" height="1"/>
<rect x="401" y="578" width="1" height="2"/>
<rect x="405" y="578" width="2" height="1"/>
<rect x="397" y="580" width="1" height="1"/>
<rect x="399" y="584" width="2" height="2"/>
<rect x="401" y="584" width="2" height="1"/>
<rect x="395" y="586" width="2" height="1"/>
<rect x="395" y="588" width="2" height="2"/>
<rect x="528" y="425" width="2" height="1"/>
<rect x="530" y="427" width="2" height="2"/>
<rect x="532" y="427" width="1" height="2"/>
<rect x="528" y="429" width="2" height="1"/>
<rect x="532" y="429" width="2" height="2"/>
<rect x="528" y="431" width="1" height="1"/>
<rect x="536" y="431" width="1" height="1"/>
<rect x="542" y="435" width="2" height="1"/>
<rect x="528" y="437" width="1" height="2"/>
<rect x="530" y="437" width="2" height="1"/>
<rect x="534" y="437" width="2" height="1"/>
<rect x="538" y="437" width="1" height="1"/>
<rect x="538" y="439" width="2" height="1"/>
<rect x="540" y="439" width="1" height="1"/>
<rect x="544" y="439" width="1" height="1"/>
<rect x="552" y="439" width="2" height="2"/>
<rect x="528" y="441" width="2" height="1"/>
<rect x="534" y="441" width="1" height="2"/>
<rect x="538" y="441" width="2" height="2"/>
<rect x="544" y="441" width="2" height="1"/>
<rect x="546" y="441" width="2" height="1"/>
<rect x="554" y="441" width="2" height="1"/>
<rect x="564" y="441" width="1" height="2"/>
<rect x="530" y="443" width="2" height="1"/>
<rect x="536" y="443" width="2" height="1"/>
<rect x="544" y="443" width="1" height="2"/>
<rect x="548" y="443" width="1" height="2"/>
<rect x="550" y="443" width="2" height="1"/>
<rect x="552" y="443" width="1" height="1"/>
<rect x="558" y="443" width="2" height="2"/>
<rect x="562" y="443" width="2" height="2"/>
<rect x="564" y="443" width="1" height="2"/>
<rect x="528" y="445" width="2" height="1"/>
<rect x="530" y="445" width="2" height="1"/>
<rect x="542" y="445" width="2" height="1"/>
<rect x="550" y="445" width="2" height="2"/>
<rect x="554" y="445" width="1" height="2"/>
<rect x="572" y="445" width="2" height="1"/>
<rect x="528" y="447" width="1" height="2"/>
<rect x="534" y="447" width="1" height="1"/>
<rect x="542" y="447" width="2" height="1"/>
<rect x="562" y="447" width="2" height="1"/>
<rect x="564" y="447" width="2" height="1"/>
<rect x="566" y="447" width="2" height="1"/>
<rect x="512" y="449" width="1" height="1"/>
<rect x="524" y="449" width="2" height="2"/>
<rect x="528" y="449" width="1" height="2"/>
<rect x="530" y="449" width="2" height="1"/>
<rect x="532" y="449" width="1" height="1"/>
<rect x="534" y="449" width="2" height="2"/>
<rect x="538" y="449" width="2" height="1"/>
<rect x="540" y="449" width="1" height="2"/>
<rect x="546" y="449" width="1" height="2"/>
<rect x="556" y="449" width="1" height="1"/>
<rect x="558" y="449" width="1" height="2"/>
<rect x="512" y="451" width="1" height="2"/>
<rect x="520" y="451" width="1" height="2"/>
<rect x="528" y="451" width="2" height="1"/>
<rect x="532" y="451" width="2" height="2"/>
<rect x="544" y="451" width="2" height="1"/>
<rect x="546" y="451" width="1" height="2"/>
<rect x="518" y="453" width="1" height="1"/>
<rect x="532" y="453" width="2" height="2"/>
<rect x="536" y="453" width="2" height="1"/>
<rect x="538" y="453" width="2" height="1"/>
<rect x="542" y="453" width="2" height="2"/>
<rect x="518" y="455" width="1" height="1"/>
<rect x="532" y="455" width="1" height="2"/>
<rect x="536" y="455" width="1" height="2"/>
<rect x="538" y="455" width="1" height="1"/>
<rect x="542" y="455" width="1" height="2"/>
<rect x="544" y="455" width="1" height="1"/>
<rect x="546" y="455" width="2" height="1"/>
<rect x="540" y="457" width="2" height="1"/>
<rect x="540" y="459" width="1" height="2"/>
<rect x="542" y="459" width="2" height="1"/>
<rect x="510" y="465" width="2" height="2"/>
</g>
<g fill="#fff">
<polygon points="402.0,557.3 408.0,556.8 416.0,557.3 423.0,556.4 429.0,555.0 427.0,556.6 421.0,558.2 416.6,560.0 414.6,562.8 413.0,561.0 407.5,558.4 402.5,558.4"/>
<polygon points="440.0,548.6 443.0,548.0 445.2,548.4 444.2,550.6 441.5,551.8 440.2,550.6"/>
<polygon points="448.6,550.6 451.4,549.6 450.3,551.6 449.2,552.4"/>
<polygon points="444.6,555.0 447.3,554.4 448.6,556.0 446.6,556.5"/>
<polygon points="501.5,542.2 500.5,543.8 499.5,542.5"/>
<polygon points="426.0,558.2 429.0,557.6 428.0,559.0"/>
</g>
</svg>

<div class="a" style="left:842px;top:74px;width:17px;height:685px;background:linear-gradient(90deg,#f3f1ea,#fefefb);border-left:1px solid #eeede5;border-right:1px solid #e8ecf0"></div>
<div class="sb-btn" style="left:843px;top:74px;width:15px;height:16px"><svg class="a" style="left:2px;top:4px" width="9" height="6" viewBox="0 0 9 6"><path d="M1 5L4.5 1.5L8 5" stroke="#4d6185" stroke-width="2" fill="none"/></svg></div>
<div class="a" style="left:844px;top:90px;width:13px;height:1px;background:#9fb4e0"></div>
<div class="thumb" style="left:843px;top:91px;width:15px;height:533px;background:linear-gradient(90deg,#c8d8fc,#bcd0fa 60%,#b0c6f6)"><div class="a" style="left:3px;top:262px;width:7px;height:8px;background-image:linear-gradient(#eef3ff 50%,#9cb4e8 50%);background-size:7px 2px"></div></div>
<div class="sb-btn" style="left:843px;top:742px;width:15px;height:16px"><svg class="a" style="left:2px;top:5px" width="9" height="6" viewBox="0 0 9 6"><path d="M1 1L4.5 4.5L8 1" stroke="#4d6185" stroke-width="2" fill="none"/></svg></div>
<div class="a" style="left:7px;top:742px;width:195px;height:17px;background:linear-gradient(#f3f1ea,#fefefb)"></div>
<div class="sb-btn" style="left:7px;top:743px;width:16px;height:15px"><svg class="a" style="left:4px;top:2px" width="6" height="9" viewBox="0 0 6 9"><path d="M5 1L1.5 4.5L5 8" stroke="#4d6185" stroke-width="2" fill="none"/></svg></div>
<div class="thumb" style="left:39px;top:743px;width:145px;height:15px;background:linear-gradient(#c8d8fc,#bcd0fa 60%,#b0c6f6)"><div class="a" style="left:68px;top:3px;width:8px;height:7px;background-image:linear-gradient(90deg,#eef3ff 50%,#9cb4e8 50%);background-size:2px 7px"></div></div>
<div class="sb-btn" style="left:185px;top:743px;width:16px;height:15px"><svg class="a" style="left:5px;top:2px" width="6" height="9" viewBox="0 0 6 9"><path d="M1 1L4.5 4.5L1 8" stroke="#4d6185" stroke-width="2" fill="none"/></svg></div>


<div class="a" style="left:4px;top:762px;width:858px;height:1px;background:#fff"></div><div class="a" style="left:4px;top:780px;width:858px;height:1px;background:#d6cfb4"></div>
<div class="stp" style="left:8px;width:552px"></div>
<div class="stp" style="left:561px;width:215px"><div class="a" style="left:1px;top:-1px;font-size:12px;white-space:nowrap;letter-spacing:-0.2px;transform:scaleX(0.92);transform-origin:0 0">SPSS Statistics プロセッサは使用可能です</div></div>
<div class="stp" style="left:777px;width:27px"></div>
<div class="stp" style="left:805px;width:27px"></div>
<div class="stp" style="left:833px;width:28px"></div>

</body></html>
